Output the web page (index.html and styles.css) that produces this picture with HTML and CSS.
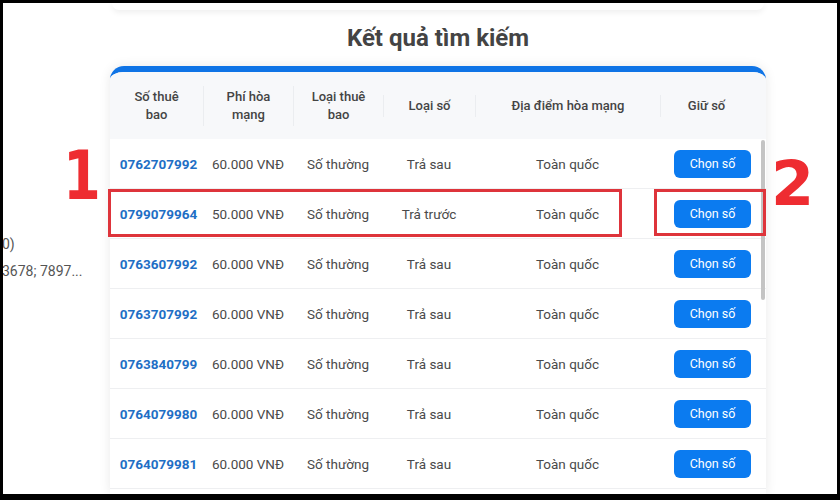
FILE: index.html
```html
<!DOCTYPE html>
<html lang="vi">
<head>
    <meta charset="UTF-8">
    <title>Kết quả tìm kiếm</title>
    <link rel="stylesheet" href="styles.css">
</head>
<body>
<div class="screen">
    <div class="side">
        <div class="side-line">0)</div>
        <div class="side-line">3678; 7897...</div>
    </div>

    <div class="main">
        <div class="top-card"></div>
        <h2 class="title">Kết quả tìm kiếm</h2>

        <div class="result-card">
            <div class="table-head">
                <div class="th">Số thuê<br>bao</div>
                <div class="th sep">Phí hòa<br>mạng</div>
                <div class="th sep">Loại thuê<br>bao</div>
                <div class="th sep">Loại số</div>
                <div class="th sep">Địa điểm hòa mạng</div>
                <div class="th sep">Giữ số</div>
            </div>
            <div class="table-wrap">
                <div id="table-body" class="table-body"></div>
                <div class="scroll-thumb"></div>
            </div>
        </div>
    </div>

    <div class="mark mark-1">1</div>
    <div class="mark mark-2">2</div>
    <div class="box box-1"></div>
    <div class="box box-2"></div>
</div>

<script>
    const rows = [
        ['0762707992', '60.000 VNĐ', 'Trả sau'],
        ['0799079964', '50.000 VNĐ', 'Trả trước'],
        ['0763607992', '60.000 VNĐ', 'Trả sau'],
        ['0763707992', '60.000 VNĐ', 'Trả sau'],
        ['0763840799', '60.000 VNĐ', 'Trả sau'],
        ['0764079980', '60.000 VNĐ', 'Trả sau'],
        ['0764079981', '60.000 VNĐ', 'Trả sau']
    ];
    const body = document.getElementById('table-body');

    for (let [num, fee, kind] of rows) {
        const row = document.createElement('div');
        row.className = 'tr';
        row.innerHTML =
            '<div class="td num">' + num + '</div>' +
            '<div class="td">' + fee + '</div>' +
            '<div class="td">Số thường</div>' +
            '<div class="td">' + kind + '</div>' +
            '<div class="td">Toàn quốc</div>' +
            '<div class="td"><button class="pick-button">Chọn số</button></div>';
        body.appendChild(row);
    }
</script>
</body>
</html>
```

FILE: styles.css
```css
body {
    margin: 0;
    background: #000;
    font-family: Roboto, "Noto Sans", sans-serif;
}
.screen {
    position: relative;
    display: flex;
    width: 834px;
    height: 491px;
    margin: 3px 3px 6px 3px;
    background: #fff;
    overflow: hidden;
}
.side {
    width: 107px;
    flex-shrink: 0;
    padding-top: 228px;
    overflow: hidden;
}
.side-line {
    font-size: 14px;
    line-height: 27px;
    color: #555;
    white-space: nowrap;
    margin-left: -1px;
}
.main {
    width: 656px;
    flex-shrink: 0;
    display: flex;
    flex-direction: column;
}
.top-card {
    height: 7px;
    margin: 0 2px;
    background: #fff;
    border-radius: 0 0 10px 10px;
    box-shadow: 0 2px 6px rgba(0, 0, 0, 0.08);
}
.title {
    margin: 13px 0 13px;
    font-size: 24px;
    line-height: 30px;
    font-weight: 700;
    color: #444;
    text-align: center;
}
.result-card {
    flex: 1;
    display: flex;
    flex-direction: column;
    border-top: 6px solid #0f74e6;
    border-radius: 14px 14px 0 0;
    background: #fff;
    box-shadow: 0 0 12px rgba(0, 0, 0, 0.09);
    overflow: hidden;
}
.table-head,
.tr {
    display: grid;
    grid-template-columns: 93px 90px 90px 92px 185px 100px;
}
.table-head {
    height: 67px;
    flex-shrink: 0;
    align-items: center;
    background: #f7f8fa;
}
.th {
    font-size: 13px;
    line-height: 18px;
    font-weight: 500;
    color: #444;
    text-align: center;
}
.th.sep {
    border-left: 1px solid #ebedf0;
    padding: 2px 0;
}
.th:last-child {
    padding-right: 8px;
}
.table-wrap {
    position: relative;
    flex: 1;
    overflow: hidden;
}
.scroll-thumb {
    position: absolute;
    top: 1px;
    right: 1px;
    width: 4px;
    height: 160px;
    border-radius: 2px;
    background: #c4c4c4;
}
.tr {
    height: 50px;
    box-sizing: border-box;
    border-bottom: 1px solid #eeeff1;
    align-items: center;
}
.td {
    font-size: 13.5px;
    color: #4a4a4a;
    text-align: center;
    white-space: nowrap;
}
.num {
    font-weight: 700;
    color: #1f6fc5;
    padding-left: 4px;
}
.pick-button {
    width: 77px;
    height: 28px;
    margin-left: 5px;
    border: none;
    border-radius: 6px;
    background: #0b7bf0;
    color: #fff;
    font-family: inherit;
    font-size: 12.5px;
    cursor: pointer;
}
.mark {
    position: absolute;
    font-family: "DejaVu Sans", sans-serif;
    font-weight: 700;
    line-height: 1;
    color: #ee2c31;
    transform-origin: left top;
}
.mark-1 {
    left: 60px;
    top: 139px;
    font-size: 68px;
    transform: scaleX(0.8);
}
.mark-2 {
    left: 768px;
    top: 150px;
    font-size: 62px;
}
.box {
    position: absolute;
    border: 3px solid #de343b;
}
.box-1 {
    left: 105px;
    top: 186px;
    width: 508px;
    height: 42px;
}
.box-2 {
    left: 651px;
    top: 186px;
    width: 106px;
    height: 41px;
}
```
